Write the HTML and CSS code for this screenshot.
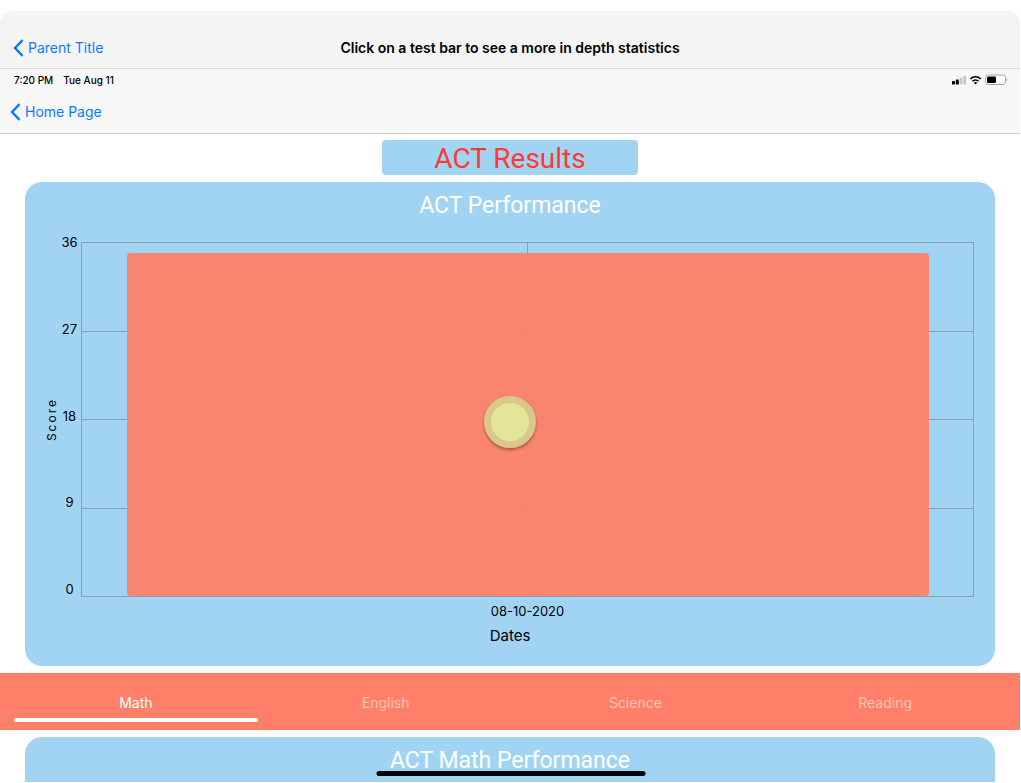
FILE: index.html
```html
<!DOCTYPE html>
<html lang="en">
<head>
<meta charset="utf-8">
<meta name="viewport" content="width=device-width, initial-scale=1">
<title>ACT Results</title>
<link rel="stylesheet" href="styles.css">
</head>
<body>
<div class="screen">
  <header class="parent-nav">
    <a class="back" href="#"><svg class="chevron" viewBox="0 0 11 18" aria-hidden="true"><path d="M9.600 1.200 2 9l7.600 7.800"/></svg>Parent Title</a>
    <h1 class="parent-title">Click on a test bar to see a more in depth statistics</h1>
  </header>

  <div class="home-nav">
    <div class="status">
      <span>7:20 PM</span>
      <span>Tue Aug 11</span>
      <svg class="status-icons" viewBox="0 0 56 12" role="img" aria-label="Signal, Wi-Fi and battery">
        <rect x="0" y="7" width="3" height="3.500" rx=".6"/>
        <rect x="3.800" y="5.500" width="3" height="5" rx=".6"/>
        <rect x="7.600" y="3.500" width="2.800" height="7" rx=".6" fill="#c6c6c6"/>
        <rect x="11.300" y="1.800" width="2.800" height="8.700" rx=".6" fill="#c6c6c6"/>
        <g fill="none" stroke="#000" stroke-width="1.600">
          <path d="M18.300 5a7.300 7.300 0 0 1 10.400 0"/>
          <path d="M20.400 7.300a4.300 4.300 0 0 1 6.200 0"/>
        </g>
        <path d="M23.500 10.600 21.700 8.800a2.600 2.600 0 0 1 3.600 0z"/>
        <rect x="33.500" y="1" width="20" height="9.500" rx="2.800" fill="#fff" stroke="#a3a3a3"/>
        <rect x="35" y="2.500" width="9" height="6.500" rx="1.200"/>
        <path d="M54.500 4.200q1.800 1.500 0 3.200z" fill="#a3a3a3"/>
      </svg>
    </div>
    <a class="back home-back" href="#"><svg class="chevron" viewBox="0 0 11 18" aria-hidden="true"><path d="M9.600 1.200 2 9l7.600 7.800"/></svg>Home Page</a>
  </div>

  <main class="content">
    <h2 class="results">ACT Results</h2>

    <section class="card">
      <h3 class="card-title">ACT Performance</h3>
      <div class="chart">
        <div class="axis-name">Score</div>
        <div class="ticks">
          <span>36</span><span>27</span><span>18</span><span>9</span><span>0</span>
        </div>
        <div class="plot">
          <div class="cell"></div><div class="cell"></div>
          <div class="cell"></div><div class="cell"></div>
          <div class="cell"></div><div class="cell"></div>
          <div class="cell"></div><div class="cell"></div>
          <button class="bar" type="button" aria-label="08-10-2020, score 35"></button>
          <div class="touch"></div>
        </div>
        <div class="date">08-10-2020</div>
      </div>
      <div class="dates">Dates</div>
    </section>

    <nav class="tabs">
      <button class="tab active" type="button">Math</button>
      <button class="tab" type="button">English</button>
      <button class="tab" type="button">Science</button>
      <button class="tab" type="button">Reading</button>
    </nav>

    <section class="card next-card">
      <h3 class="card-title">ACT Math Performance</h3>
    </section>
  </main>
  <div class="home-indicator"></div>
</div>
</body>
</html>
```

FILE: styles.css
```css
* {
  box-sizing: border-box;
}

body {
  margin: 0;
  background: #fff;
  color: #000;
  font-family: Inter, "Liberation Sans", sans-serif;
}

h1, h2, h3 {
  margin: 0;
  font-weight: 400;
}

button {
  border: 0;
  padding: 0;
  font: inherit;
  cursor: pointer;
}

.screen {
  position: relative;
  display: flex;
  flex-direction: column;
  min-height: 100vh;
  padding: 11px 1px 1px 0;
}

.parent-nav {
  display: grid;
  grid-template-columns: 1fr auto 1fr;
  align-items: center;
  height: 58px;
  padding: 16px 13px 0;
  background: #f4f4f4;
  border-bottom: 1px solid #d8d8d8;
  border-radius: 12px 12px 0 0;
}

.parent-title {
  font-size: 14px;
  font-weight: 600;
  line-height: 20px;
}

.back {
  display: flex;
  align-items: center;
  gap: 4px;
  color: #0a7cff;
  font-size: 14px;
  line-height: 20px;
  text-decoration: none;
}

.chevron {
  width: 11px;
  height: 18px;
  fill: none;
  stroke: currentColor;
  stroke-width: 2.400;
}

.home-nav {
  height: 65px;
  background: #f7f7f7;
  border-bottom: 1px solid #cfcfcf;
}

.status {
  display: flex;
  align-items: center;
  gap: 10px;
  height: 22px;
  padding: 0 12px 0 14px;
  font-size: 10px;
  font-weight: 500;
}

.status-icons {
  width: 56px;
  height: 12px;
  margin-left: auto;
}

.home-back {
  width: max-content;
  padding: 11px 10px;
}

.content {
  display: flex;
  flex: 1;
  flex-direction: column;
  gap: 7px;
  padding-top: 6px;
}

.results {
  align-self: center;
  width: 256px;
  padding-top: 2px;
  border-radius: 4px;
  background: #a1d4f3;
  color: #ff3b30;
  font-family: Roboto, Inter, sans-serif;
  font-size: 28px;
  line-height: 33px;
  text-align: center;
}

.card {
  margin: 0 25px;
  padding: 9px 0 19px;
  border-radius: 17px;
  background: #a1d4f3;
}

.card-title {
  color: #fff;
  font-family: Roboto, Inter, sans-serif;
  font-size: 23px;
  line-height: 30px;
  text-align: center;
}

.chart {
  display: grid;
  grid-template-columns: 17px 21px 1fr;
  grid-template-rows: 355px 28px;
  padding: 21px 21px 0 18px;
}

.axis-name {
  align-self: center;
  font-size: 12px;
  letter-spacing: 2px;
  line-height: 18px;
  text-align: center;
  writing-mode: vertical-rl;
  transform: rotate(180deg);
}

.ticks {
  display: flex;
  flex-direction: column;
  justify-content: space-between;
  height: 363px;
  margin-top: -8px;
  padding-right: 2px;
  font-size: 13px;
  line-height: 16px;
  text-align: center;
}

.plot {
  position: relative;
  display: grid;
  grid-template-columns: 1fr 1fr;
  grid-template-rows: repeat(4, 1fr);
  border-top: 1px solid #8c9fae;
  border-left: 1px solid #8c9fae;
}

.cell {
  border-right: 1px solid #8c9fae;
  border-bottom: 1px solid #8c9fae;
}

.bar {
  position: absolute;
  inset: 2.778% 5% 1px;
  border-radius: 4px;
  background: rgb(254 127 101 / 94%);
}

.touch {
  position: absolute;
  top: 179px;
  left: 48%;
  width: 52px;
  height: 52px;
  border: 7px solid #d9c889;
  border-radius: 50%;
  background: #e2e699;
  box-shadow: 0 2px 3px rgb(90 40 20 / 50%);
  transform: translate(-50%, -50%);
  pointer-events: none;
}

.date {
  grid-column: 3;
  font-size: 13px;
  line-height: 28px;
  text-align: center;
}

.dates {
  font-size: 15px;
  line-height: 22px;
  text-align: center;
}

.tabs {
  display: grid;
  grid-template-columns: repeat(4, 1fr);
  height: 57px;
  padding: 0 10px 0 11px;
  background: #ff7f68;
}

.tab {
  margin: 0 3px 8px;
  padding-top: 13px;
  border-bottom: 4px solid transparent;
  background: transparent;
  color: #ffc4ba;
  font-size: 14px;
}

.tab.active {
  position: relative;
  color: #fff;
}

.tab.active::after {
  content: "";
  position: absolute;
  inset: auto 0 -4px;
  height: 4px;
  border-radius: 2px;
  background: #fff;
}

.next-card {
  flex: 1;
  padding-bottom: 0;
  border-radius: 17px 17px 0 0;
}

.home-indicator {
  position: absolute;
  bottom: 7px;
  left: 50%;
  width: 269px;
  height: 5px;
  border-radius: 3px;
  background: #000;
  transform: translateX(-50%);
}
```
